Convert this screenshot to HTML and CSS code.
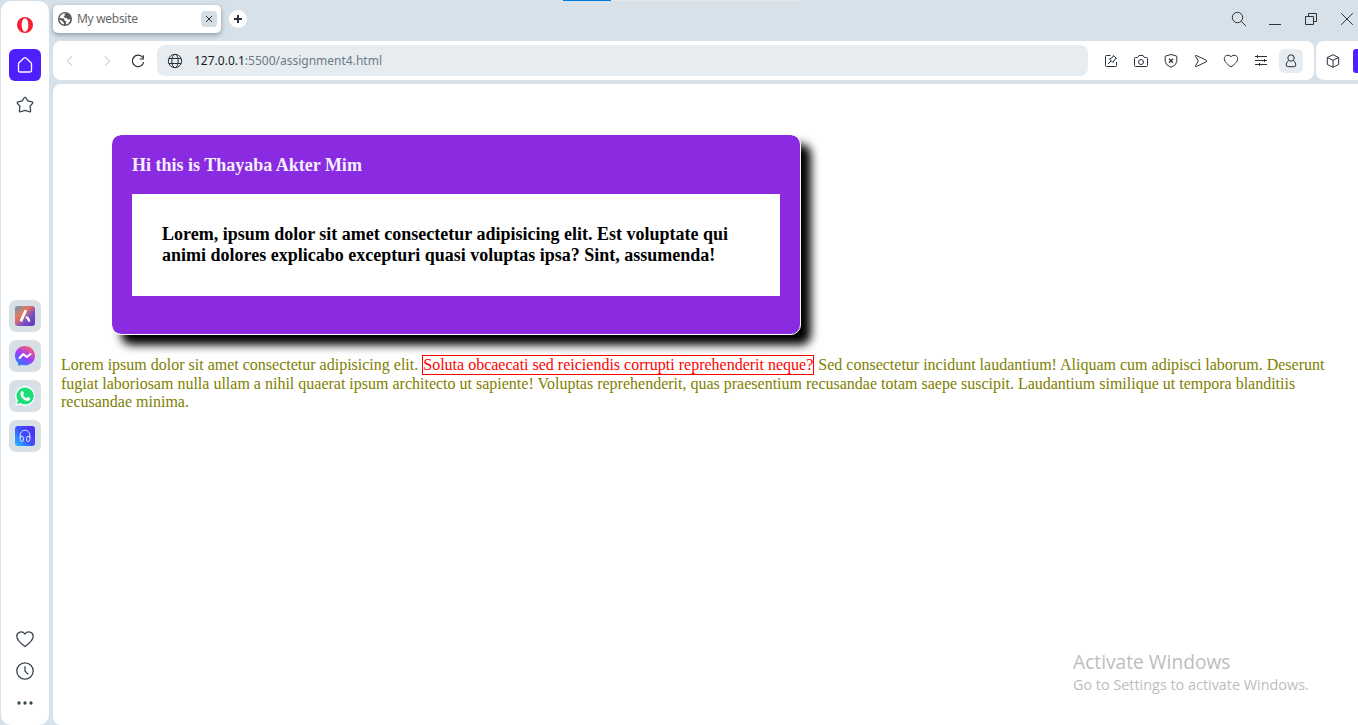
FILE: index.html
```html
<!DOCTYPE html>
<html lang="en">
<head>
<meta charset="utf-8">
<title>My website</title>
<link rel="stylesheet" href="styles.css">
</head>
<body>
<div class="browser">
  <aside class="sidebar">
    <div class="side-top">
      <svg class="opera" viewBox="0 0 16 16"><path fill="#fa1e32" fill-rule="evenodd" d="M8 0a8 8 0 1 0 0 16A8 8 0 1 0 8 0zM8 1.300c2 0 3.300 3 3.300 6.700S10 14.700 8 14.700 4.700 11.700 4.700 8 6 1.300 8 1.300z"/></svg>
      <div class="home"><svg class="i18" viewBox="0 0 18 18"><path d="M2.500 7.200 8 2.100q1-.8 2 0l5.500 5.100v7.300q0 1.500-1.500 1.500H4q-1.500 0-1.500-1.500z"/></svg></div>
      <svg class="i18 star" viewBox="0 0 18 18"><path d="M9 1.300q.7 0 1 .7l1.800 2.900 4.200 1q1.500.4.500 1.500l-2.400 2.900.5 4.400q0 1.600-1.400 1L9 14.400l-4.200 1.300q-1.400.6-1.400-1l.5-4.400-2.400-2.900q-1-1.100.5-1.500l4.200-1L8 2q.3-.7 1-.7z"/></svg>
    </div>
    <div class="apps">
      <div class="app"><svg viewBox="0 0 20 20"><defs><linearGradient id="a" x2="1" y2="1"><stop stop-color="#5499c0"/><stop offset=".35" stop-color="#ec7958"/><stop offset=".65" stop-color="#7b4fc4"/><stop offset="1" stop-color="#5c35bd"/></linearGradient></defs><rect width="20" height="20" rx="3" fill="url(#a)"/><path d="M10.500 5.200 6.200 14.300" stroke="#fff" stroke-width="2.800" stroke-linecap="round"/><path d="M12 11.500q1.300.8 1.900 3" stroke="#fff" stroke-width="2.600" stroke-linecap="round" fill="none"/></svg></div>
      <div class="app"><svg viewBox="0 0 20 20"><defs><linearGradient id="b" x1=".8" y1="0" x2=".2" y2="1"><stop stop-color="#ff6968"/><stop offset=".5" stop-color="#a439fa"/><stop offset="1" stop-color="#1689ff"/></linearGradient></defs><path fill="url(#b)" d="M10 0C4.300 0 0 4.200 0 9.700c0 2.900 1.200 5.400 3.200 7.200V20l3-1.300q1.800.6 3.800.6c5.700 0 10-4.100 10-9.600S15.700 0 10 0z"/><path d="m4.600 12 3.600-4 3.600 3 3.800-3" fill="none" stroke="#fff" stroke-width="2" stroke-linecap="round" stroke-linejoin="round"/></svg></div>
      <div class="app"><svg viewBox="0 0 20 20"><path fill="#fff" d="M10.200 0A9.900 9.900 0 0 0 1.700 15L.2 20l5.200-1.400A9.900 9.900 0 1 0 10.200 0z"/><path d="M10.200 1.500A8.400 8.400 0 0 0 3 14.500L2 17.900l3.600-1A8.400 8.400 0 1 0 10.200 1.500z" fill="#18df77"/><path fill="#fff" d="M6.500 5.300q.7-.7 1.400 0l1 2q.2.500-.9 1.700 1.300 2.300 3.400 3.200l1.200-1.300 2.500 1.200q.4 2.500-2.300 2.800-3.600-.1-6.200-3.700-2.300-3.500-.1-5.900z"/></svg></div>
      <div class="app"><svg viewBox="0 0 20 20"><defs><linearGradient id="c" y1=".8" x2="1" y2="0"><stop stop-color="#22b1ff"/><stop offset=".4" stop-color="#3c55ff"/><stop offset="1" stop-color="#5625ef"/></linearGradient></defs><rect width="20" height="20" rx="3" fill="url(#c)"/><path d="M5.200 12V9a4.800 4.800 0 0 1 9.600 0v3M5.200 10.500H7q1.400 0 1.400 1.400v2.200q0 1.400-1.400 1.400-1.800 0-1.800-2zM14.800 10.500H13q-1.400 0-1.400 1.400v2.200q0 1.400 1.400 1.400 1.800 0 1.800-2z" fill="none" stroke="#dcd9ff"/></svg></div>
    </div>
    <div class="side-bottom">
      <svg class="i18" viewBox="0 0 18 18"><path d="M9 16.500C5.500 14 .8 10.500.8 6.300c0-4.500 5.600-6 8.200-2.300 2.600-3.700 8.200-2.200 8.200 2.300 0 4.200-4.700 7.700-8.200 10.200z"/></svg>
      <svg class="i18" viewBox="0 0 18 18"><circle cx="9" cy="9" r="8.200"/><path d="M9 4.300V9l3.200 3.400"/></svg>
      <svg class="i18" viewBox="0 0 18 18"><g fill="#3b454d" stroke="none"><circle cx="3" cy="9" r="1.650"/><circle cx="9" cy="9" r="1.650"/><circle cx="15" cy="9" r="1.650"/></g></svg>
    </div>
  </aside>
  <div class="main">
    <header class="tabs">
      <div class="tab">
        <svg class="favicon" viewBox="0 0 14 14"><circle cx="7" cy="7" r="7" fill="#55585b"/><path fill="#fff" d="M8 1.200 6.300 2.300 7 3.500 5.600 4.600 7.200 6h1.700l.6 1.600 2.800-.3q-.2 3.600-3.700 5.200l-.8-1 .6-2-2-.9-.5-2.200-2.500-.2-1.500-.4-.2 2Q2.100 11.300 5.500 12.500l.8-1.300L3.600 8.400 1.500 7.500Q1.300 3.500 5 1.500z"/></svg>
        <span class="tab-title">My website</span>
        <span class="close"><svg viewBox="0 0 8 8"><path d="m1 1 6 6M7 1 1 7"/></svg></span>
      </div>
      <span class="plus"><svg viewBox="0 0 8 8"><path d="M4 0v8M0 4h8"/></svg></span>
      <span class="progress"><i></i></span>
      <div class="window-controls">
        <svg viewBox="0 0 16 16"><circle cx="6.500" cy="6.500" r="5.200"/><path d="m10.400 10.400 4.700 4.800"/></svg>
        <svg viewBox="0 0 16 16"><path d="M2 13.500h12"/></svg>
        <svg viewBox="0 0 16 16"><path d="M2.500 5.500h8v8h-8zM5.500 5.500v-3h8v8h-3"/></svg>
        <svg viewBox="0 0 16 16"><path d="m2.200 2.200 11.600 11.600M13.800 2.200 2.200 13.800"/></svg>
      </div>
    </header>
    <div class="bars">
      <div class="toolbar">
        <div class="nav">
          <svg class="dim" viewBox="0 0 16 16"><path d="M10 3.500 5.200 8l4.800 4.500"/></svg>
          <svg class="dim forward" viewBox="0 0 16 16"><path d="M6 3.500 10.800 8 6 12.500"/></svg>
          <svg viewBox="0 0 16 16"><path d="M12.700 4.500A5.700 5.700 0 1 0 13.700 9M13.300 2.300V6H9.600" stroke-width="1.200"/></svg>
        </div>
        <div class="address">
          <svg viewBox="0 0 16 16"><circle cx="8" cy="8" r="6.700"/><ellipse cx="8" cy="8" rx="3.200" ry="6.700"/><path d="M2 5.500h12M2 10.500h12"/></svg>
          <span class="url"><b>127.0.0.1</b>:5500/assignment4.html</span>
        </div>
        <div class="actions">
          <svg viewBox="0 0 16 16"><path d="M7.500 2.500h-4q-1 0-1 1v9q0 1 1 1h9q1 0 1-1V9M5 11l3-3M10.500 2.500l3 3-1.500.5-2 3.500-3.500-3.500 3.500-2z"/></svg>
          <svg viewBox="0 0 16 16"><path d="M2.500 4.500h2L6 2.500h4l1.500 2h2q1 0 1 1v7q0 1-1 1h-11q-1 0-1-1v-7q0-1 1-1z"/><circle cx="8" cy="9" r="2.500"/></svg>
          <svg viewBox="0 0 16 16"><path d="M8 1.500 13.500 3q.3 0 .3 1v4.300q0 3.800-5.800 6-5.800-2.200-5.800-6V4q0-1 .3-1z"/><path d="M6 5.700l4 4M10 5.700l-4 4" stroke-width="1.300"/></svg>
          <svg viewBox="0 0 16 16"><path d="M2.500 3.200Q2 2.100 3.500 2.600l9.800 4.600q1.200.8 0 1.600l-9.800 4.600q-1.500.5-1-.6L5.300 8z"/></svg>
          <svg viewBox="0 0 16 16"><path d="M8 14C5.500 12.300 1.300 9 1.300 5.700c0-3.500 4.500-4.700 6.700-1.900 2.200-2.800 6.700-1.600 6.700 1.900C14.700 9 10.500 12.300 8 14z"/></svg>
          <svg viewBox="0 0 16 16"><path d="M2 3.500h12M2 7.500h12M2 11.500h12M4.500 2v3M11.500 6v3M6.500 10v3"/></svg>
          <span class="profile"><svg viewBox="0 0 16 16"><circle cx="8" cy="5" r="3.200"/><path d="M5.500 7.500Q3.200 9 3.200 12q0 1.700 1.700 1.700h6.200q1.700 0 1.700-1.700 0-3-2.300-4.500"/></svg></span>
        </div>
      </div>
      <div class="ai-bar">
        <svg viewBox="0 0 16 16"><path d="M8 1.700 13.700 4.500v7L8 14.300 2.300 11.500v-7zM2.300 4.500 8 7.300l5.700-2.800M8 7.300v7"/></svg>
        <i class="ai-button"></i>
      </div>
    </div>
    <main class="page">
      <section class="card">
        <h3 class="card-title">Hi this is Thayaba Akter Mim</h3>
        <div class="card-text">Lorem, ipsum dolor sit amet consectetur adipisicing elit. Est voluptate qui<br>animi dolores explicabo excepturi quasi voluptas ipsa? Sint, assumenda!</div>
      </section>
      <p class="copy">Lorem ipsum dolor sit amet consectetur adipisicing elit. <span class="mark">Soluta obcaecati sed reiciendis corrupti reprehenderit neque?</span> Sed consectetur incidunt laudantium! Aliquam cum adipisci laborum. Deserunt<br>fugiat laboriosam nulla ullam a nihil quaerat ipsum architecto ut sapiente! Voluptas reprehenderit, quas praesentium recusandae totam saepe suscipit. Laudantium similique ut tempora blanditiis<br>recusandae minima.</p>
      <div class="activate"><div class="activate-title">Activate Windows</div><div class="activate-sub">Go to Settings to activate Windows.</div></div>
    </main>
  </div>
</div>
</body>
</html>
```
FILE: styles.css
```css
* { box-sizing: border-box; }
body { margin: 0; background: #d7e1e9; font-family: "Noto Sans", sans-serif; overflow: hidden; }
svg { display: block; flex: none; fill: none; stroke: #29313a; stroke-width: 1; }
.browser { display: flex; gap: 4px; height: 725px; padding-left: 1px; }
.sidebar { width: 48px; margin-top: 1px; background: #fff; border-radius: 10px; display: flex; flex-direction: column; align-items: center; flex: none; }
.side-top { height: 299px; display: flex; flex-direction: column; align-items: center; padding-top: 16px; }
.opera { width: 16px; height: 16px; stroke: none; }
.home { margin-top: 16px; width: 32px; height: 32px; border-radius: 6px; background: #4f1fff; display: grid; place-items: center; }
.home svg { stroke: #fff; }
.i18 { width: 18px; height: 18px; stroke: #3b454d; stroke-width: 1.3; }
.star { margin-top: 15px; }
.apps { display: flex; flex-direction: column; gap: 8px; }
.app { width: 32px; height: 32px; border-radius: 7px; background: #d6e0e6; display: grid; place-items: center; }
.app svg { width: 20px; height: 20px; stroke: none; }
.side-bottom { margin-top: auto; display: flex; flex-direction: column; gap: 14px; padding: 0 1px 13px 0; }
.main { flex: 1; min-width: 0; display: flex; flex-direction: column; }
.tabs { position: relative; height: 41px; display: flex; padding-top: 5px; flex: none; }
.tab { width: 168px; height: 28px; background: #fff; border-radius: 5px; box-shadow: 0 2px 5px #6b7985b0; display: flex; align-items: center; padding: 0 4px 0 5px; }
.favicon { width: 14px; height: 14px; stroke: none; }
.tab-title { margin-left: 5px; font-size: 12px; color: #65686b; letter-spacing: -.3px; line-height: 16px; }
.close { margin-left: auto; width: 16px; height: 16px; border-radius: 4px; background: #d3dee5; display: grid; place-items: center; }
.close svg { width: 8px; height: 8px; }
.plus { margin: 5px 0 0 8px; width: 18px; height: 18px; border-radius: 50%; background: #fff; display: grid; place-items: center; }
.plus svg { width: 8px; height: 8px; stroke-width: 2; }
.progress { position: absolute; left: 510px; top: 0; width: 241px; height: 1px; background: #e5e5e5; }
.progress i { display: block; width: 48px; height: 1px; background: #0078d7; }
.window-controls { margin-left: auto; display: flex; gap: 20px; padding: 6px 3px 0 0; }
.window-controls svg { width: 16px; height: 16px; stroke: #333; }
.bars { display: flex; gap: 2px; height: 39px; flex: none; }
.toolbar { width: 1261px; background: #fff; border-radius: 8px; display: flex; align-items: center; flex: none; }
.nav { width: 104px; padding-left: 9px; display: flex; gap: 18px; flex: none; }
.nav svg, .address svg, .actions svg, .ai-bar svg { width: 16px; height: 16px; }
.nav .dim { stroke: #b9bdc0; }
.nav .forward { margin: 0 -3px 0 3px; }
.address { width: 931px; height: 31px; background: #e7ecf0; border-radius: 8px; display: flex; align-items: center; padding-left: 10px; gap: 11px; flex: none; }
.url { font-size: 12px; line-height: 16px; color: #6c7b88; white-space: nowrap; }
.url b { color: #171c22; font-weight: 400; }
.actions { margin-left: 15px; display: flex; gap: 14px; align-items: center; }
.profile { margin-left: -4px; width: 24px; height: 24px; border-radius: 5px; background: #e7ecf0; display: grid; place-items: center; }
.ai-bar { width: 42px; flex: none; background: #fff; border-radius: 8px 0 0 8px; display: flex; align-items: center; padding-left: 9px; gap: 12px; overflow: hidden; }
.ai-button { width: 24px; height: 24px; flex: none; border-radius: 3px; background: #4f1fff; }
.page { margin-top: 4px; flex: 1; background: #fff; border-radius: 8px 0 0 8px; padding: 50px 0 0 8px; display: flex; flex-direction: column; font-family: "Liberation Serif", serif; }
.card { margin-left: 50px; width: 690px; height: 201px; border: 1px solid #fff; border-radius: 10px; background: #8a2be2; background-clip: padding-box; padding: 20px; box-shadow: 10px 10px 10px #000; }
.card-title { margin: 0; color: #f5f0ff; font-size: 18px; line-height: 20px; }
.card-text { margin-top: 19px; height: 102px; background: #fff; padding: 30px; font-size: 18px; font-weight: 700; line-height: 21px; white-space: nowrap; }
.copy { margin: 21px 0 0; color: #808000; font-size: 16px; line-height: 18.6px; white-space: nowrap; }
.mark { color: red; border: 1px solid red; padding-bottom: 1px; }
.activate { margin: auto 49px 30px auto; width: 236px; font-family: "Open Sans", sans-serif; color: #bdbdbd; white-space: nowrap; }
.activate-title { font-size: 19.200px; line-height: 22px; padding-bottom: 2px; }
.activate-sub { font-size: 14.400px; line-height: 20px; }
```
